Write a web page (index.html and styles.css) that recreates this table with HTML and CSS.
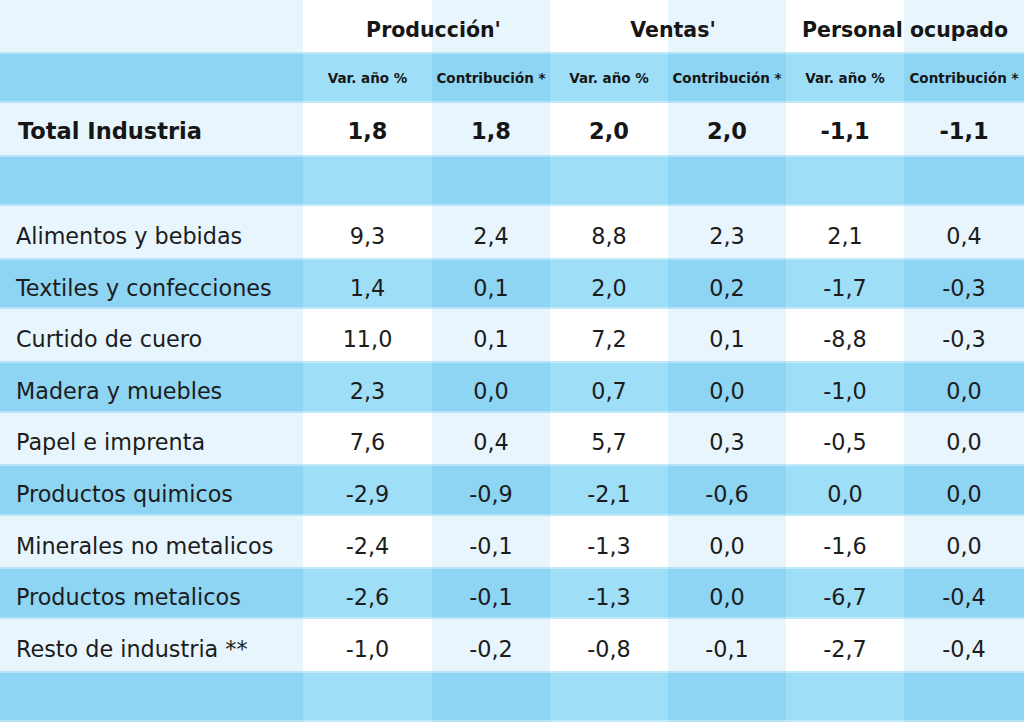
FILE: index.html
```html
<!DOCTYPE html>
<html lang="es">
<head>
<meta charset="utf-8">
<title>Industria</title>
<link rel="stylesheet" href="styles.css">
</head>
<body>
<div class="table">
  <div class="row head">
    <div class="c lbl"></div>
    <div class="c grp g1">Producción'</div>
    <div class="c grp g2">Ventas'</div>
    <div class="c grp g3">Personal ocupado</div>
  </div>
  <div class="row blue sub">
    <div class="c lbl"></div>
    <div class="c">Var. año %</div>
    <div class="c">Contribución *</div>
    <div class="c">Var. año %</div>
    <div class="c">Contribución *</div>
    <div class="c">Var. año %</div>
    <div class="c">Contribución *</div>
  </div>
  <div class="row light total">
    <div class="c lbl">Total Industria</div>
    <div class="c">1,8</div><div class="c">1,8</div>
    <div class="c">2,0</div><div class="c">2,0</div>
    <div class="c">-1,1</div><div class="c">-1,1</div>
  </div>
  <div class="row blue">
    <div class="c lbl"></div><div class="c"></div><div class="c"></div><div class="c"></div><div class="c"></div><div class="c"></div><div class="c"></div>
  </div>
  <div class="row light data">
    <div class="c lbl">Alimentos y bebidas</div>
    <div class="c">9,3</div><div class="c">2,4</div><div class="c">8,8</div><div class="c">2,3</div><div class="c">2,1</div><div class="c">0,4</div>
  </div>
  <div class="row blue data">
    <div class="c lbl">Textiles y confecciones</div>
    <div class="c">1,4</div><div class="c">0,1</div><div class="c">2,0</div><div class="c">0,2</div><div class="c">-1,7</div><div class="c">-0,3</div>
  </div>
  <div class="row light data">
    <div class="c lbl">Curtido de cuero</div>
    <div class="c">11,0</div><div class="c">0,1</div><div class="c">7,2</div><div class="c">0,1</div><div class="c">-8,8</div><div class="c">-0,3</div>
  </div>
  <div class="row blue data">
    <div class="c lbl">Madera y muebles</div>
    <div class="c">2,3</div><div class="c">0,0</div><div class="c">0,7</div><div class="c">0,0</div><div class="c">-1,0</div><div class="c">0,0</div>
  </div>
  <div class="row light data">
    <div class="c lbl">Papel e imprenta</div>
    <div class="c">7,6</div><div class="c">0,4</div><div class="c">5,7</div><div class="c">0,3</div><div class="c">-0,5</div><div class="c">0,0</div>
  </div>
  <div class="row blue data">
    <div class="c lbl">Productos quimicos</div>
    <div class="c">-2,9</div><div class="c">-0,9</div><div class="c">-2,1</div><div class="c">-0,6</div><div class="c">0,0</div><div class="c">0,0</div>
  </div>
  <div class="row light data">
    <div class="c lbl">Minerales no metalicos</div>
    <div class="c">-2,4</div><div class="c">-0,1</div><div class="c">-1,3</div><div class="c">0,0</div><div class="c">-1,6</div><div class="c">0,0</div>
  </div>
  <div class="row blue data">
    <div class="c lbl">Productos metalicos</div>
    <div class="c">-2,6</div><div class="c">-0,1</div><div class="c">-1,3</div><div class="c">0,0</div><div class="c">-6,7</div><div class="c">-0,4</div>
  </div>
  <div class="row light data">
    <div class="c lbl">Resto de industria **</div>
    <div class="c">-1,0</div><div class="c">-0,2</div><div class="c">-0,8</div><div class="c">-0,1</div><div class="c">-2,7</div><div class="c">-0,4</div>
  </div>
  <div class="row blue">
    <div class="c lbl"></div><div class="c"></div><div class="c"></div><div class="c"></div><div class="c"></div><div class="c"></div><div class="c"></div>
  </div>
</div>
</body>
</html>
```

FILE: styles.css
```css
html, body {
  margin: 0;
  padding: 0;
  background: #ffffff;
}
body {
  font-family: "DejaVu Sans", "Liberation Sans", sans-serif;
  color: #161616;
}
.table {
  width: 1024px;
  height: 722px;
  display: flex;
  flex-direction: column;
}
.row {
  flex: 1 1 0;
  display: grid;
  grid-template-columns: 303px 129px 118px 118px 118px 118px 1fr;
}
.c {
  display: flex;
  align-items: center;
  justify-content: center;
  white-space: nowrap;
}
.c.lbl {
  justify-content: flex-start;
  padding-left: 16px;
}

/* light rows */
.light .c:nth-child(odd) { background: #e8f5fd; }
.light .c:nth-child(even) { background: #ffffff; }
/* blue rows */
.blue .c:nth-child(odd) { background: #8ed4f3; }
.blue .c:nth-child(even) { background: #9edff7; }
.blue .c {
  box-shadow: inset 0 2px 0 rgba(255,255,255,0.35), inset 0 -2px 0 rgba(255,255,255,0.35);
}

/* header */
.head .lbl { background: #e8f5fd; }
.grp {
  grid-column: span 2;
  font-weight: bold;
  font-size: 20.5px;
  padding-top: 8px;
}
.g1 { background: linear-gradient(to right, #ffffff 129px, #e8f5fd 129px); padding-left: 14px; }
.g2 { background: linear-gradient(to right, #ffffff 118px, #e8f5fd 118px); padding-left: 10px; }
.g3 { background: linear-gradient(to right, #ffffff 118px, #e8f5fd 118px); }

.sub .c {
  font-size: 13.5px;
  font-weight: bold;
  padding-top: 1px;
}

.total .c {
  font-size: 22.5px;
  font-weight: bold;
  padding-top: 4px;
}
.total .lbl { padding-left: 18px; }

.data .c {
  font-size: 22.3px;
  padding-top: 8px;
  color: #1c1c1c;
}
```
